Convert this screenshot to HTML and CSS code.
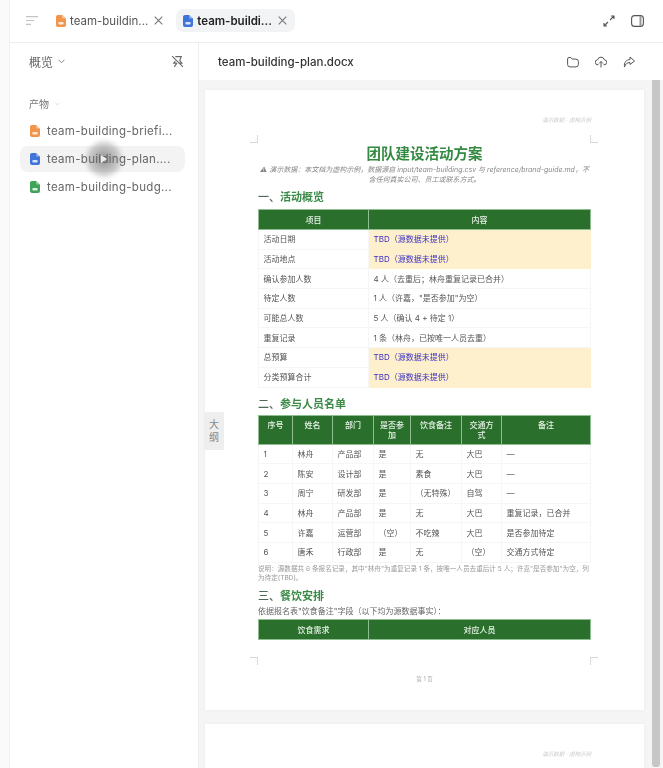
FILE: index.html
```html
<!DOCTYPE html>
<html lang="zh-CN">

    <head>
        <meta charset="UTF-8">
        <meta name="viewport" content="width=device-width, initial-scale=1.0">
        <title>team-building-plan.docx</title>
        <link rel="stylesheet" href="styles.css">
    </head>

    <body>
        <svg class="defs" width="0" height="0">
            <symbol id="file" viewBox="0 0 10 12">
                <path d="M2 0h4.200L10 3.600V10a2 2 0 0 1-2 2H2a2 2 0 0 1-2-2V2a2 2 0 0 1 2-2z" fill="currentColor"></path>
                <path d="M6.200 0L10 3.600H7.400a1.200 1.200 0 0 1-1.200-1.200z" fill="#fff" opacity=".45"></path>
                <rect x="2.400" y="7" width="5.200" height="2.600" rx=".8" fill="#fff" opacity=".8"></rect>
            </symbol>
            <symbol id="close" viewBox="0 0 9 9">
                <path d="M.7 .7l7.600 7.600M8.300 .7L.7 8.300" stroke="#777" stroke-width="1.100" fill="none"></path>
            </symbol>
        </svg>

        <div class="app">
            <!-- Barra de abas -->
            <header class="topbar">
                <svg class="menu-icon" width="12" height="9" viewBox="0 0 12 9">
                    <path d="M0 .7h12M0 4.500h8M0 8.300h5" stroke="#c4c4c4" stroke-width="1.200" fill="none"></path>
                </svg>
                <div class="tab">
                    <svg class="file-icon orange" width="10" height="12"><use href="#file"></use></svg>
                    <span class="tab-name">team-buildin...</span>
                    <svg class="tab-close" width="9" height="9"><use href="#close"></use></svg>
                </div>
                <div class="tab active">
                    <svg class="file-icon blue" width="10" height="12"><use href="#file"></use></svg>
                    <span class="tab-name">team-buildi...</span>
                    <svg class="tab-close" width="9" height="9"><use href="#close"></use></svg>
                </div>
                <div class="topbar-actions">
                    <svg width="12" height="12" viewBox="0 0 12 12" fill="none" stroke="#555" stroke-width="1.100">
                        <path d="M7 5l4-4M8 1h3v3M5 7l-4 4M1 8v3h3"></path>
                    </svg>
                    <svg width="13" height="12" viewBox="0 0 13 12" fill="none" stroke="#555" stroke-width="1.100">
                        <rect x=".6" y=".6" width="11.800" height="10.800" rx="3"></rect>
                        <path d="M9.500 1v10" stroke-width="2" stroke="#999"></path>
                    </svg>
                </div>
            </header>

            <div class="workspace">
                <!-- Barra lateral -->
                <aside class="sidebar">
                    <div class="side-head">
                        <span class="side-title">概览</span>
                        <svg class="chev" width="7" height="5" viewBox="0 0 7 5" fill="none" stroke="#888" stroke-width="1">
                            <path d="M.5 .8l3 3 3-3"></path>
                        </svg>
                        <svg class="unpin" width="13" height="13" viewBox="0 0 12 12" fill="none" stroke="#666" stroke-width="1">
                            <path d="M1 1l10 10M4 1.500h5.500L8 5l2 2.500H7M5 7.500H2.500L4 5.500M3 11l2.500-3.500"></path>
                        </svg>
                    </div>
                    <div class="group-title">
                        <span>产物</span>
                        <svg width="5" height="4" viewBox="0 0 7 5" fill="none" stroke="#ccc" stroke-width="1">
                            <path d="M.5 .8l3 3 3-3"></path>
                        </svg>
                    </div>
                    <ul class="file-list">
                        <li class="file-item">
                            <svg class="file-icon orange" width="10" height="12"><use href="#file"></use></svg>
                            <span class="file-name">team-building-briefi...</span>
                        </li>
                        <li class="file-item selected">
                            <svg class="file-icon blue" width="10" height="12"><use href="#file"></use></svg>
                            <span class="file-name">team-building-plan....</span>
                        </li>
                        <li class="file-item">
                            <svg class="file-icon green" width="10" height="12"><use href="#file"></use></svg>
                            <span class="file-name">team-building-budg...</span>
                        </li>
                    </ul>
                    <!-- Cursor da gravação -->
                    <div class="cursor-halo"></div>
                    <svg class="cursor" width="6" height="8" viewBox="0 0 8 10">
                        <path d="M0 0l8 5-8 5z" fill="#eeeeee"></path>
                    </svg>
                </aside>

                <main class="viewer">
                    <div class="viewer-head">
                        <span class="doc-name">team-building-plan.docx</span>
                        <div class="viewer-actions">
                            <svg width="12" height="12" viewBox="0 0 12 12" fill="none" stroke="#555" stroke-width="1">
                                <path d="M.6 3a1.500 1.500 0 0 1 1.500-1.500h1.800l1.300 1.600h3.700a2.500 2.500 0 0 1 2.500 2.500v2.800a2.500 2.500 0 0 1-2.500 2.500H3a2.400 2.400 0 0 1-2.400-2.400z"></path>
                            </svg>
                            <svg width="12" height="12" viewBox="0 0 12 12" fill="none" stroke="#555" stroke-width="1">
                                <path d="M3.500 8.800H3a2.500 2.500 0 0 1-.4-5 3.500 3.500 0 0 1 6.800 0 2.500 2.500 0 0 1-.4 5h-.5M6 11.500V5.500M4 7.500l2-2 2 2"></path>
                            </svg>
                            <svg width="12" height="12" viewBox="0 0 12 12" fill="none" stroke="#555" stroke-width="1">
                                <path d="M7 1l4.500 4L7 8.500V6.500C4 6.500 2.500 8 1.500 11 .8 6.500 3 3.800 7 3.500z"></path>
                            </svg>
                        </div>
                    </div>

                    <div class="doc-area">
                        <div class="pages">
                            <section class="page">
                                <i class="crop crop-tl"></i>
                                <i class="crop crop-tr"></i>
                                <i class="crop crop-bl"></i>
                                <i class="crop crop-br"></i>
                                <div class="watermark">演示数据 · 虚构示例</div>
                                <h1 class="doc-title">团队建设活动方案</h1>
                                <p class="doc-warning">⚠ 演示数据：本文档为虚构示例，数据源自 input/team-building.csv 与 reference/brand-guide.md，不含任何真实公司、员工或联系方式。</p>

                                <h2 class="section-title"><span>一、</span>活动概览</h2>
                                <table class="doc-table">
                                    <colgroup>
                                        <col class="col-key">
                                        <col>
                                    </colgroup>
                                    <thead>
                                        <tr><th>项目</th><th>内容</th></tr>
                                    </thead>
                                    <tbody>
                                        <tr><td>活动日期</td><td class="tbd">TBD（源数据未提供）</td></tr>
                                        <tr><td>活动地点</td><td class="tbd">TBD（源数据未提供）</td></tr>
                                        <tr><td>确认参加人数</td><td>4 人（去重后；林舟重复记录已合并）</td></tr>
                                        <tr><td>待定人数</td><td>1 人（许嘉，"是否参加"为空）</td></tr>
                                        <tr><td>可能总人数</td><td>5 人（确认 4 + 待定 1）</td></tr>
                                        <tr><td>重复记录</td><td>1 条（林舟，已按唯一人员去重）</td></tr>
                                        <tr><td>总预算</td><td class="tbd">TBD（源数据未提供）</td></tr>
                                        <tr><td>分类预算合计</td><td class="tbd">TBD（源数据未提供）</td></tr>
                                    </tbody>
                                </table>

                                <h2 class="section-title second"><span>二、</span>参与人员名单</h2>
                                <table class="doc-table people">
                                    <colgroup>
                                        <col class="c1"><col class="c2"><col class="c3"><col class="c4">
                                        <col class="c5"><col class="c6"><col>
                                    </colgroup>
                                    <thead>
                                        <tr>
                                            <th>序号</th><th>姓名</th><th>部门</th><th>是否参加</th>
                                            <th>饮食备注</th><th>交通方式</th><th>备注</th>
                                        </tr>
                                    </thead>
                                    <tbody>
                                        <tr><td>1</td><td>林舟</td><td>产品部</td><td>是</td><td>无</td><td>大巴</td><td>—</td></tr>
                                        <tr><td>2</td><td>陈安</td><td>设计部</td><td>是</td><td>素食</td><td>大巴</td><td>—</td></tr>
                                        <tr><td>3</td><td>周宁</td><td>研发部</td><td>是</td><td>（无特殊）</td><td>自驾</td><td>—</td></tr>
                                        <tr><td>4</td><td>林舟</td><td>产品部</td><td>是</td><td>无</td><td>大巴</td><td>重复记录，已合并</td></tr>
                                        <tr><td>5</td><td>许嘉</td><td>运营部</td><td>（空）</td><td>不吃辣</td><td>大巴</td><td>是否参加待定</td></tr>
                                        <tr><td>6</td><td>唐禾</td><td>行政部</td><td>是</td><td>无</td><td>（空）</td><td>交通方式待定</td></tr>
                                    </tbody>
                                </table>
                                <p class="table-note">说明：源数据共 6 条报名记录，其中"林舟"为重复记录 1 条，按唯一人员去重后计 5 人；许嘉"是否参加"为空，列为待定(TBD)。</p>

                                <h2 class="section-title third"><span>三、</span>餐饮安排</h2>
                                <p class="doc-text">依据报名表"饮食备注"字段（以下均为源数据事实）：</p>
                                <table class="doc-table">
                                    <colgroup>
                                        <col class="col-key">
                                        <col>
                                    </colgroup>
                                    <thead>
                                        <tr><th>饮食需求</th><th>对应人员</th></tr>
                                    </thead>
                                </table>
                                <div class="page-number">第 1 页</div>
                            </section>

                            <section class="page">
                                <div class="watermark">演示数据 · 虚构示例</div>
                            </section>
                        </div>
                        <div class="scrollbar"></div>
                    </div>

                    <div class="outline-tab">大<br>纲</div>
                </main>
            </div>
        </div>
    </body>

</html>
```

FILE: styles.css
```css
* {
    box-sizing: border-box;
}

html,
body {
    margin: 0;
    height: 100%;
    overflow: hidden;
    background: #fff;
}

body {
    font-family: Inter, "Noto Sans CJK SC", sans-serif;
    color: #333;
}

.defs {
    position: absolute;
}

.app {
    display: flex;
    flex-direction: column;
    height: 768px;
    margin-left: 9px;
    border-left: 1px solid #f0f0f0;
    box-shadow: -9px 0 0 #fafafa;
    filter: blur(0.35px);
}

/* Barra de abas */
.topbar {
    display: flex;
    align-items: center;
    height: 43px;
    padding: 0 19px 1px 16px;
    border-bottom: 1px solid #eeeeee;
}

.menu-icon {
    margin-right: 11px;
}

.tab {
    display: flex;
    align-items: center;
    height: 23px;
    padding: 0 7px;
    border-radius: 7px;
    font-size: 11.5px;
    color: #555;
}

.tab + .tab {
    margin-left: 6px;
}

.tab.active {
    background: #f2f3f5;
    color: #222;
    font-weight: 600;
}

.tab-name {
    margin-left: 4px;
    white-space: nowrap;
}

.tab-close {
    flex: none;
    margin-left: 6px;
}

.tab.active .tab-close {
    margin-right: 1px;
}

.topbar-actions {
    display: flex;
    align-items: center;
    gap: 16px;
    margin-left: auto;
}

.file-icon {
    flex: none;
}

.orange {
    color: #f0954a;
}

.blue {
    color: #3f74d8;
}

.green {
    color: #3fa45a;
}

.workspace {
    display: flex;
    flex: 1;
    min-height: 0;
}

/* Barra lateral */
.sidebar {
    position: relative;
    flex: none;
    width: 189px;
    padding: 0 13px 0 10px;
    border-right: 1px solid #eeeeee;
}

.side-head {
    display: flex;
    align-items: center;
    height: 37px;
    padding: 0 1px 0 9px;
}

.side-title {
    font-size: 12px;
    color: #666;
}

.chev {
    margin-left: 5px;
}

.unpin {
    margin-left: auto;
}

.group-title {
    display: flex;
    align-items: center;
    gap: 6px;
    margin-top: 15px;
    padding-left: 9px;
    font-size: 10px;
    line-height: 18px;
    color: #777;
}

.file-list {
    margin: 5px 0 0;
    padding: 0;
    list-style: none;
}

.file-item {
    display: flex;
    align-items: center;
    height: 26px;
    margin-bottom: 2px;
    padding: 0 10px;
    border-radius: 8px;
}

.file-item.selected {
    background: #f3f3f4;
}

.file-name {
    margin-left: 7px;
    font-size: 11.5px;
    letter-spacing: 0.3px;
    color: #666;
    white-space: nowrap;
}

.cursor-halo {
    position: absolute;
    left: 76px;
    top: 98px;
    width: 36px;
    height: 36px;
    border-radius: 50%;
    background: radial-gradient(circle, rgba(90, 90, 90, 0.65) 0%, rgba(110, 110, 110, 0.4) 45%, rgba(140, 140, 140, 0) 100%);
    filter: blur(2px);
}

.cursor {
    position: absolute;
    left: 91px;
    top: 112px;
}

/* Visualizador */
.viewer {
    position: relative;
    display: flex;
    flex: 1;
    flex-direction: column;
    min-width: 0;
}

.viewer-head {
    display: flex;
    align-items: center;
    height: 37px;
    padding: 0 28px 0 19px;
}

.doc-name {
    font-size: 11.5px;
    font-weight: 500;
    color: #333;
}

.viewer-actions {
    display: flex;
    gap: 16px;
    margin-left: auto;
}

.doc-area {
    display: flex;
    flex: 1;
    min-height: 0;
    overflow: hidden;
    padding-left: 6px;
    background: #f5f5f5;
}

.pages {
    display: flex;
    flex: none;
    flex-direction: column;
    gap: 14px;
    width: 439px;
    padding-top: 10px;
}

.page {
    position: relative;
    flex: none;
    height: 620px;
    padding: 25px 53px 0;
    background: #fff;
    box-shadow: 0 0 3px rgba(0, 0, 0, 0.05);
}

.scrollbar {
    flex: none;
    width: 8px;
    margin-left: 8px;
    margin-bottom: 1px;
    border-radius: 0 0 3px 3px;
    background: #c6c6c6;
}

.outline-tab {
    position: absolute;
    left: 5px;
    top: 369px;
    width: 20px;
    height: 38px;
    padding-top: 6px;
    background: #eeeeee;
    font-size: 10px;
    line-height: 13px;
    text-align: center;
    color: #888;
}

/* Documento */
.watermark {
    font-size: 5.5px;
    line-height: 10px;
    text-align: right;
    color: #c9c9c9;
    font-style: italic;
}

.crop {
    position: absolute;
    width: 8px;
    height: 8px;
    border: 0 solid #d8d8d8;
}

.crop-tl {
    left: 45px;
    top: 45px;
    border-width: 0 1px 1px 0;
}

.crop-tr {
    right: 46px;
    top: 45px;
    border-width: 0 0 1px 1px;
}

.crop-bl {
    left: 45px;
    top: 567px;
    border-width: 1px 1px 0 0;
}

.crop-br {
    right: 46px;
    top: 567px;
    border-width: 1px 0 0 1px;
}

.doc-title {
    margin: 19px 0 0;
    font-size: 14.5px;
    font-weight: 700;
    line-height: 20px;
    text-align: center;
    color: #348a40;
}

.doc-warning {
    margin: 1px 0 0;
    font-size: 7px;
    font-style: italic;
    line-height: 9.5px;
    text-align: center;
    color: #888;
}

.section-title {
    margin: 5px 0 4px;
    font-size: 11px;
    font-weight: 700;
    line-height: 16px;
    color: #3b8a47;
}

.section-title span {
    color: #4d6a58;
    font-weight: 500;
}

.section-title.second {
    margin-top: 8px;
    margin-bottom: 3px;
}

.section-title.third {
    margin-top: 5px;
    margin-bottom: 0;
}

.doc-table {
    width: 100%;
    table-layout: fixed;
    border-collapse: collapse;
    font-size: 8px;
    line-height: 10px;
}

.col-key {
    width: 110px;
}

.doc-table th {
    height: 20px;
    padding: 0 5px;
    background: #2a702c;
    border: 1px solid #8fbf91;
    font-weight: 500;
    color: #e8f2e8;
}

.doc-table td {
    height: 19.7px;
    padding: 0 4.5px;
    border: 1px solid #f6f6f6;
    color: #555;
}

.doc-table td.tbd {
    background: #fff0cd;
    border-color: #fff0cd;
    color: #3b30c4;
}

.people th {
    height: 29px;
    vertical-align: top;
    padding-top: 4px;
}

.c1 {
    width: 34px;
}

.c2 {
    width: 40px;
}

.c3 {
    width: 41px;
}

.c4 {
    width: 37px;
}

.c5 {
    width: 51px;
}

.c6 {
    width: 40px;
}

.table-note {
    margin: 2.5px 0 0;
    font-size: 6.6px;
    line-height: 9px;
    color: #999;
}

.doc-text {
    margin: 2px 0 2px;
    font-size: 8px;
    line-height: 11px;
    color: #666;
}

.page-number {
    position: absolute;
    left: 0;
    right: 0;
    top: 585px;
    font-size: 5.5px;
    text-align: center;
    color: #aaa;
}
```
